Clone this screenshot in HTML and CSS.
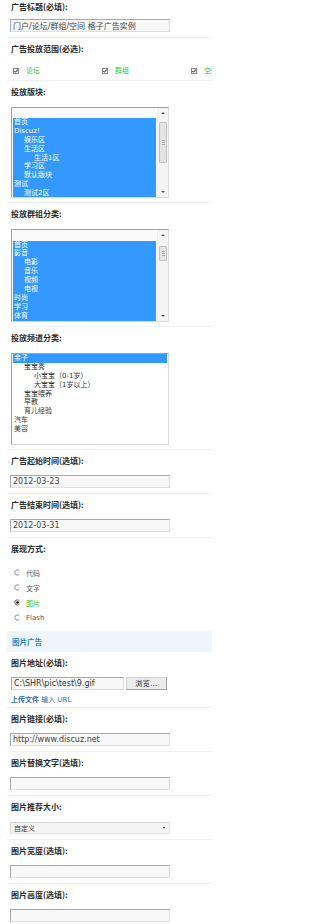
FILE: index.html
```html
<!DOCTYPE html>
<html lang="zh-CN">
<head>
<meta charset="utf-8">
<title>广告设置</title>
<link rel="stylesheet" href="styles.css">
</head>
<body>
<div class="page">

  <div class="row first">
    <div class="lbl">广告标题(必填):</div>
    <div class="fld"><input class="txt" type="text" value="门户/论坛/群组/空间 格子广告实例"></div>
  </div>

  <div class="row">
    <div class="lbl">广告投放范围(必选):</div>
    <div class="checks">
      <label class="chk"><svg class="cb" viewBox="0 0 7 7"><rect x="0.5" y="0.5" width="6" height="6" fill="#fff" stroke="#7c7c7c"/><path d="M1.4 3.4 L2.9 5 L5.6 1.6" fill="none" stroke="#111" stroke-width="1.1"/></svg><span class="green">论坛</span></label>
      <label class="chk"><svg class="cb" viewBox="0 0 7 7"><rect x="0.5" y="0.5" width="6" height="6" fill="#fff" stroke="#7c7c7c"/><path d="M1.4 3.4 L2.9 5 L5.6 1.6" fill="none" stroke="#111" stroke-width="1.1"/></svg><span class="green">群组</span></label>
      <label class="chk"><svg class="cb" viewBox="0 0 7 7"><rect x="0.5" y="0.5" width="6" height="6" fill="#fff" stroke="#7c7c7c"/><path d="M1.4 3.4 L2.9 5 L5.6 1.6" fill="none" stroke="#111" stroke-width="1.1"/></svg><span class="green">空间</span></label>
    </div>
  </div>

  <div class="row">
    <div class="lbl">投放版块:</div>
    <div class="fld list-fld">
      <div class="listbox lb1">
        <div class="opts">
          <div class="opt blank"></div>
          <div class="opt sel">首页</div>
          <div class="opt sel">Discuz!</div>
          <div class="opt sel l1">娱乐区</div>
          <div class="opt sel l1">生活区</div>
          <div class="opt sel l2">生活1区</div>
          <div class="opt sel l1">学习区</div>
          <div class="opt sel l1">默认版块</div>
          <div class="opt sel">测试</div>
          <div class="opt sel l1">测试2区</div>
        </div>
        <div class="scroll">
          <div class="arrow up"></div>
          <div class="track"><div class="thumb th1"><i></i><i></i><i></i></div></div>
          <div class="arrow down"></div>
        </div>
      </div>
    </div>
  </div>

  <div class="row">
    <div class="lbl">投放群组分类:</div>
    <div class="fld list-fld">
      <div class="listbox lb2">
        <div class="opts">
          <div class="opt blank"></div>
          <div class="opt sel">首页</div>
          <div class="opt sel">影音</div>
          <div class="opt sel l1">电影</div>
          <div class="opt sel l1">音乐</div>
          <div class="opt sel l1">视频</div>
          <div class="opt sel l1">电视</div>
          <div class="opt sel">时尚</div>
          <div class="opt sel">学习</div>
          <div class="opt sel">体育</div>
        </div>
        <div class="scroll">
          <div class="arrow up"></div>
          <div class="track"><div class="thumb th2"><i></i><i></i><i></i></div></div>
          <div class="arrow down"></div>
        </div>
      </div>
    </div>
  </div>

  <div class="row">
    <div class="lbl">投放频道分类:</div>
    <div class="fld list-fld">
      <div class="listbox lb3">
        <div class="opts">
          <div class="opt sel">亲子</div>
          <div class="opt l1">宝宝秀</div>
          <div class="opt l2">小宝宝（0-1岁）</div>
          <div class="opt l2">大宝宝（1岁以上）</div>
          <div class="opt l1">宝宝喂养</div>
          <div class="opt l1">早教</div>
          <div class="opt l1">育儿经验</div>
          <div class="opt">汽车</div>
          <div class="opt">美容</div>
        </div>
      </div>
    </div>
  </div>

  <div class="row">
    <div class="lbl">广告起始时间(选填):</div>
    <div class="fld"><input class="txt" type="text" value="2012-03-23"></div>
  </div>

  <div class="row">
    <div class="lbl">广告结束时间(选填):</div>
    <div class="fld"><input class="txt" type="text" value="2012-03-31"></div>
  </div>

  <div class="row noline">
    <div class="lbl">展现方式:</div>
    <div class="radios">
      <label class="radio"><svg class="rb" viewBox="0 0 8 8"><circle cx="4" cy="4" r="3" fill="#fff" stroke="#e2e2e2"/><path d="M5.6 1.5 A3 3 0 1 0 5.6 6.5" fill="none" stroke="#8a8a8a"/></svg><span>代码</span></label>
      <label class="radio"><svg class="rb" viewBox="0 0 8 8"><circle cx="4" cy="4" r="3" fill="#fff" stroke="#e2e2e2"/><path d="M5.6 1.5 A3 3 0 1 0 5.6 6.5" fill="none" stroke="#8a8a8a"/></svg><span>文字</span></label>
      <label class="radio"><svg class="rb" viewBox="0 0 8 8"><circle cx="4" cy="4" r="3" fill="#fff" stroke="#bdbdbd"/><path d="M5.6 1.5 A3 3 0 1 0 5.6 6.5" fill="none" stroke="#6a6a6a"/><circle cx="4" cy="4" r="1.5" fill="#111"/></svg><span class="green">图片</span></label>
      <label class="radio"><svg class="rb" viewBox="0 0 8 8"><circle cx="4" cy="4" r="3" fill="#fff" stroke="#e2e2e2"/><path d="M5.6 1.5 A3 3 0 1 0 5.6 6.5" fill="none" stroke="#8a8a8a"/></svg><span class="latin">Flash</span></label>
    </div>
  </div>

  <div class="band">图片广告</div>

  <div class="row">
    <div class="lbl">图片地址(必填):</div>
    <div class="fld file-fld">
      <div class="file">
        <input class="txt path" type="text" value="C:\SHR\pic\test\9.gif">
        <button class="browse" type="button">浏览...</button>
      </div>
      <div class="links"><a class="strong">上传文件</a> <a>输入 URL</a></div>
    </div>
  </div>

  <div class="row">
    <div class="lbl">图片链接(必填):</div>
    <div class="fld"><input class="txt" type="text" value="http://www.discuz.net"></div>
  </div>

  <div class="row">
    <div class="lbl">图片替换文字(选填):</div>
    <div class="fld"><input class="txt" type="text" value=""></div>
  </div>

  <div class="row">
    <div class="lbl">图片推荐大小:</div>
    <div class="fld drop-fld">
      <div class="drop"><span>自定义</span><span class="caret"></span></div>
    </div>
  </div>

  <div class="row">
    <div class="lbl">图片宽度(选填):</div>
    <div class="fld"><input class="txt" type="text" value=""></div>
  </div>

  <div class="row">
    <div class="lbl">图片高度(选填):</div>
    <div class="fld"><input class="txt" type="text" value=""></div>
  </div>

</div>
</body>
</html>
```

FILE: styles.css
```css
html, body {
  margin: 0;
  padding: 0;
  background: #fff;
  overflow: hidden;
}

body {
  width: 212px;
  font-family: "DejaVu Sans", "Noto Sans CJK SC", sans-serif;
  color: #333;
}

.page {
  width: 205px;
  margin-left: 7px;
  overflow: hidden;
}

.row {
  border-bottom: 1px solid #eef2f5;
  padding-left: 3px;
}

.row.noline {
  border-bottom: none;
}

.lbl {
  padding: 6px 0 8px 1px;
  line-height: 10px;
  height: 10px;
  font-size: 8px;
  font-weight: bold;
  color: #2a2a2a;
  white-space: nowrap;
  font-family: "Noto Sans CJK SC", "DejaVu Sans", sans-serif;
}

.row.first .lbl {
  padding-top: 2px;
  padding-bottom: 6px;
}

.fld {
  padding: 1px 0 5px;
}

.txt {
  box-sizing: border-box;
  display: block;
  width: 160px;
  height: 13px;
  margin: 0;
  padding: 0 2px;
  border: 1px solid;
  border-color: #a8a8a8 #dedede #dedede #a8a8a8;
  background: #f8f8f8;
  font-family: "DejaVu Sans", "Noto Sans CJK SC", sans-serif;
  font-size: 8px;
  line-height: 11px;
  color: #444;
  outline: none;
}

/* checkboxes */
.checks {
  display: flex;
  height: 18px;
  align-items: center;
  padding-left: 3px;
  overflow: hidden;
}

.chk {
  display: flex;
  align-items: center;
  width: 89px;
  flex: none;
  font-size: 7px;
  line-height: 10px;
  white-space: nowrap;
}

.cb {
  width: 6px;
  height: 6px;
  margin-right: 7px;
  flex: none;
}

.green {
  color: #33c233;
}

/* list boxes */
.list-fld {
  padding: 2px 0 4px 1px;
}

.listbox {
  box-sizing: border-box;
  width: 158px;
  height: 91px;
  border: 1px solid;
  border-color: #a0a0a0 #dadada #dadada #a0a0a0;
  background: #fff;
  display: flex;
  overflow: hidden;
}

.lb2 {
  height: 93px;
}

.lb3 {
  height: 92px;
}

.opts {
  flex: 1;
  min-width: 0;
  padding: 0 1px 0 1px;
  overflow: hidden;
}

.opt {
  height: 8.9px;
  line-height: 8.9px;
  font-size: 7px;
  padding-left: 1px;
  white-space: nowrap;
  color: #333;
}

.opt.blank {
  height: 10px;
  background: #fafafa;
}

.lb2 .opt.blank {
  height: 10.5px;
}

.opt.sel {
  background: #3399ff;
  color: #fff;
}

.opt.l1 {
  padding-left: 11px;
}

.opt.l2 {
  padding-left: 21px;
}

.scroll {
  width: 10px;
  flex: none;
  display: flex;
  flex-direction: column;
  background: #f4f4f4;
  border-left: 1px solid #f0f0f0;
}

.arrow {
  height: 10px;
  flex: none;
  display: flex;
  align-items: center;
  justify-content: center;
}

.arrow::before {
  content: "";
  width: 0;
  height: 0;
  border-left: 2px solid transparent;
  border-right: 2px solid transparent;
}

.arrow.up::before {
  border-bottom: 2px solid #555;
}

.arrow.down::before {
  border-top: 2px solid #555;
}

.track {
  flex: 1;
  padding: 0 1px;
}

.thumb {
  box-sizing: border-box;
  background: #e4e4e4;
  border: 1px solid #c4c4c4;
  border-radius: 1px;
  display: flex;
  flex-direction: column;
  align-items: center;
  justify-content: center;
  gap: 1px;
}

.thumb i {
  display: block;
  width: 3px;
  height: 1px;
  background: #a8a8a8;
}

.th1 {
  margin-top: 4px;
  height: 41px;
}

.th2 {
  margin-top: 6px;
  height: 15px;
}

/* radios */
.radios {
  padding: 3px 0 0 4px;
}

.radio {
  display: flex;
  align-items: center;
  height: 15px;
  font-size: 7px;
  color: #555;
}

.rb {
  width: 7px;
  height: 7px;
  margin-right: 5px;
  flex: none;
}

.latin {
  font-size: 7px;
}

/* band */
.band {
  margin-top: 6px;
  height: 21px;
  line-height: 21px;
  background: #eef6fc;
  padding-left: 5px;
  font-size: 7.5px;
  font-weight: bold;
  color: #2a8ad0;
  font-family: "Noto Sans CJK SC", sans-serif;
}

/* file */
.file-fld {
  padding: 1px 0 1px;
}

.file {
  display: flex;
  align-items: center;
  gap: 2px;
  padding-left: 1px;
}

.txt.path {
  width: 113px;
  height: 13px;
  color: #333;
}

.browse {
  box-sizing: border-box;
  width: 41px;
  height: 13px;
  margin: 0;
  padding: 0;
  border: 1px solid;
  border-color: #d0d0d0 #a0a0a0 #a0a0a0 #d0d0d0;
  background: #ececec;
  font-family: "Noto Sans CJK SC", "DejaVu Sans", sans-serif;
  font-size: 7px;
  line-height: 11px;
  color: #222;
  letter-spacing: 0.5px;
}

.links {
  margin-top: 4px;
  height: 12px;
  line-height: 12px;
  padding-left: 1px;
  font-size: 7px;
  color: #2b6cb0;
  white-space: nowrap;
}

.links a {
  color: #2b6cb0;
  text-decoration: none;
}

.links a.strong {
  font-weight: bold;
}

/* dropdown */
.drop-fld {
  padding: 2px 0 5px;
}

.drop {
  box-sizing: border-box;
  width: 160px;
  height: 12px;
  border: 1px solid;
  border-color: #d6d6d6 #e8e8e8 #e8e8e8 #d6d6d6;
  background: #f3f3f3;
  display: flex;
  align-items: center;
  justify-content: space-between;
  padding: 0 4px 0 3px;
  font-size: 7px;
  color: #333;
}

.caret {
  width: 0;
  height: 0;
  border-left: 1.5px solid transparent;
  border-right: 1.5px solid transparent;
  border-top: 2px solid #222;
}
```
